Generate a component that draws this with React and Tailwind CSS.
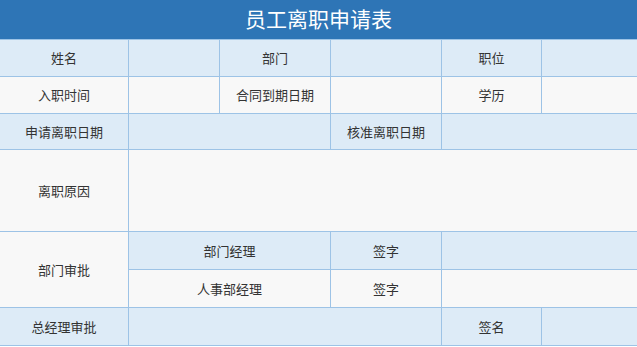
import React from "react";

const B = "bg-[#ddebf7]";
const G = "bg-[#f8f8f8]";

function Cell({ bg, className = "", children }) {
  return (
    <div className={`${bg} flex items-center justify-center ${className}`}>
      {children}
    </div>
  );
}

export default function App() {
  return (
    <div
      className="w-[637px] h-[347px] bg-white text-[13px] text-[#333]"
      style={{ fontFamily: '"Noto Sans CJK SC", "Noto Sans", sans-serif' }}
    >
      <div className="h-[39px] bg-[#2e75b6] flex items-center justify-center text-white text-[21px] pb-px">
        员工离职申请表
      </div>
      <div className="grid grid-cols-[128px_90px_110px_110px_99px_95px] grid-rows-[36px_36px_35px_81px_37px_37px_37px] gap-px bg-[#9dc3e6] py-px">
        <Cell bg={B}>姓名</Cell>
        <Cell bg={B} />
        <Cell bg={B}>部门</Cell>
        <Cell bg={B} />
        <Cell bg={B}>职位</Cell>
        <Cell bg={B} />

        <Cell bg={G}>入职时间</Cell>
        <Cell bg={G} />
        <Cell bg={G}>合同到期日期</Cell>
        <Cell bg={G} />
        <Cell bg={G}>学历</Cell>
        <Cell bg={G} />

        <Cell bg={B}>申请离职日期</Cell>
        <Cell bg={B} className="col-span-2" />
        <Cell bg={B}>核准离职日期</Cell>
        <Cell bg={B} className="col-span-2" />

        <Cell bg={G}>离职原因</Cell>
        <Cell bg={G} className="col-span-5" />

        <Cell bg={G} className="row-span-2">部门审批</Cell>
        <Cell bg={B} className="col-span-2">部门经理</Cell>
        <Cell bg={B}>签字</Cell>
        <Cell bg={B} className="col-span-2" />

        <Cell bg={G} className="col-span-2">人事部经理</Cell>
        <Cell bg={G}>签字</Cell>
        <Cell bg={G} className="col-span-2" />

        <Cell bg={B}>总经理审批</Cell>
        <Cell bg={B} className="col-span-3" />
        <Cell bg={B}>签名</Cell>
        <Cell bg={B} />
      </div>
    </div>
  );
}
